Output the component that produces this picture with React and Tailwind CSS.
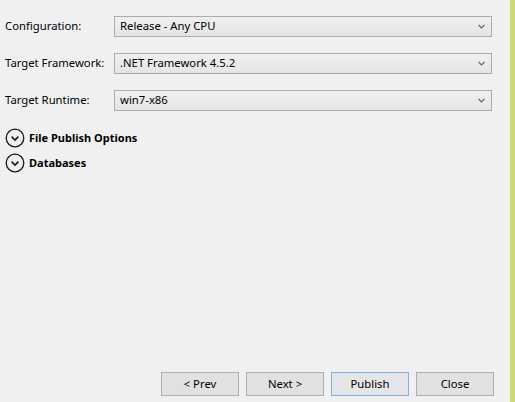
import React from "react";

const font = { fontFamily: '"Segoe UI", "Noto Sans", "Open Sans", sans-serif' };

function Select({ value }) {
  return (
    <div className="relative h-[21px] w-[378px] border border-[#acacac] bg-gradient-to-b from-[#f0f0f0] to-[#e5e5e5] flex items-center pl-[5px] text-[11.3px] text-black">
      <span>{value}</span>
      <svg className="absolute right-[6px] top-[7px]" width="7" height="5" viewBox="0 0 7 5">
        <path d="M0.5 0.8 L3.5 3.8 L6.5 0.8" fill="none" stroke="#606060" strokeWidth="1.2" />
      </svg>
    </div>
  );
}

function Expander({ label }) {
  return (
    <div className="flex items-center h-[20px]">
      <svg width="20" height="20" viewBox="0 0 20 20">
        <circle cx="10" cy="10" r="8.8" fill="none" stroke="#1a1a1a" strokeWidth="1.3" />
        <path d="M6.6 8.6 L10 12 L13.4 8.6" fill="none" stroke="#1a1a1a" strokeWidth="1.6" />
      </svg>
      <span className="ml-[4px] text-[11px] font-bold text-black">{label}</span>
    </div>
  );
}

function Btn({ children, primary }) {
  return (
    <div
      className={
        "w-[78px] h-[24px] flex items-center justify-center text-[11.3px] text-black " +
        (primary ? "border border-[#7ab0e6] bg-[#e5e5e5]" : "border border-[#adadad] bg-[#e1e1e1]")
      }
    >
      {children}
    </div>
  );
}

export default function App() {
  return (
    <div className="w-[515px] h-[402px] bg-[#f0f0f0] flex overflow-hidden" style={font}>
      <div className="flex-1 flex flex-col">
        <div className="flex flex-col pl-[5px] pt-[16px] gap-[16px]">
          <div className="flex items-center">
            <span className="w-[109px] text-[11.3px] text-black">Configuration:</span>
            <Select value="Release - Any CPU" />
          </div>
          <div className="flex items-center">
            <span className="w-[109px] text-[11.3px] text-black">Target Framework:</span>
            <Select value=".NET Framework 4.5.2" />
          </div>
          <div className="flex items-center">
            <span className="w-[109px] text-[11.3px] text-black">Target Runtime:</span>
            <Select value="win7-x86" />
          </div>
        </div>
        <div className="flex flex-col pl-[5px] mt-[17px] gap-[5px]">
          <Expander label="File Publish Options" />
          <Expander label="Databases" />
        </div>
        <div className="flex-1" />
        <div className="flex justify-end gap-[7px] pr-[16px] pb-[6px]">
          <Btn>&lt; Prev</Btn>
          <Btn>Next &gt;</Btn>
          <Btn primary>Publish</Btn>
          <Btn>Close</Btn>
        </div>
      </div>
      <div className="w-[5px] h-full bg-[#cbd97a]" />
    </div>
  );
}
